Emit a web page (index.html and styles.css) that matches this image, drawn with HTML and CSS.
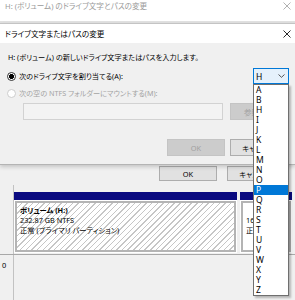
FILE: index.html
```html
<!DOCTYPE html>
<html lang="ja">

<head>
  <meta charset="UTF-8">
  <meta name="viewport" content="width=device-width, initial-scale=1.0">
  <title>ドライブ文字またはパスの変更</title>
  <link rel="stylesheet" href="styles.css">
</head>

<body>
  <div class="outer-title">
    <span>H: (ボリューム) のドライブ文字とパスの変更</span>
    <svg class="close" width="8" height="8" viewBox="0 0 8 8"><path d="M0.5 0.5L7.5 7.5M7.5 0.5L0.5 7.5" stroke="#a8a8a8" stroke-width="0.9"/></svg>
  </div>

  <div class="dialog">
    <div class="dialog-title">
      <span>ドライブ文字またはパスの変更</span>
      <svg class="close" width="8" height="8" viewBox="0 0 8 8"><path d="M0.5 0.5L7.5 7.5M7.5 0.5L0.5 7.5" stroke="#111" stroke-width="0.9"/></svg>
    </div>

    <div class="dialog-body">
      <p class="intro">H: (ボリューム) の新しいドライブ文字またはパスを入力します。</p>

      <div class="option-row">
        <label class="radio"><span class="dot checked"></span>次のドライブ文字を割り当てる(A):</label>
        <div class="combo">
          <div class="combo-box">
            <span>H</span>
            <svg width="7" height="4" viewBox="0 0 7 4"><path d="M0.5 0.5L3.5 3.3L6.5 0.5" fill="none" stroke="#444" stroke-width="0.9"/></svg>
          </div>
          <ul class="combo-list">
            <li>A</li>
            <li>B</li>
            <li>H</li>
            <li>I</li>
            <li>J</li>
            <li>K</li>
            <li>L</li>
            <li>M</li>
            <li>N</li>
            <li>O</li>
            <li class="selected">P</li>
            <li>Q</li>
            <li>R</li>
            <li>S</li>
            <li>T</li>
            <li>U</li>
            <li>V</li>
            <li>W</li>
            <li>X</li>
            <li>Y</li>
            <li>Z</li>
          </ul>
        </div>
      </div>

      <label class="radio disabled"><span class="dot"></span>次の空の NTFS フォルダーにマウントする(M):</label>

      <div class="path-row">
        <div class="textbox"></div>
        <button class="btn" disabled>参照(R)...</button>
      </div>

      <div class="actions">
        <button class="btn" disabled>OK</button>
        <button class="btn">キャンセル</button>
      </div>
    </div>
  </div>

  <div class="outer-actions">
    <button class="btn small">OK</button>
    <button class="btn small">キャンセル</button>
  </div>

  <div class="disk-row">
    <div class="disk-label"></div>
    <div class="partitions">
      <div class="part main">
        <div class="part-head"></div>
        <div class="part-body">
          <div class="part-inner hatched">
            <div class="vol-name">ボリューム (H:)</div>
            <div>232.87 GB NTFS</div>
            <div>正常 (プライマリ パーティション)</div>
          </div>
        </div>
      </div>
      <div class="part side">
        <div class="part-head"></div>
        <div class="part-body">
          <div class="part-inner">
            <div class="vol-name">&nbsp;</div>
            <div>16 MB</div>
            <div>正常 (予約済み)</div>
          </div>
        </div>
      </div>
    </div>
  </div>

  <div class="disk-row next">
    <div class="disk-label">0</div>
    <div class="partitions"></div>
  </div>
</body>

</html>
```

FILE: styles.css
```css
* {
  box-sizing: border-box;
}
body {
  margin: 0;
  width: 295px;
  height: 300px;
  overflow: hidden;
  background-color: #f0f0f0;
  font-family: 'Noto Sans', 'Noto Sans CJK JP', sans-serif;
  font-size: 7.2px;
  font-feature-settings: "palt";
  color: #000;
}
.outer-title {
  height: 23px;
  background-color: #fff;
  display: flex;
  justify-content: space-between;
  padding: 0 4px 0 5px;
  line-height: 12px;
  font-size: 7.6px;
  color: #9a9a9a;
  border-bottom: 2px solid #e2e2e2;
}
.outer-title .close {
  margin-top: 2px;
}
.dialog {
  position: relative;
  z-index: 1;
  border-top: 1px solid #c4c4c4;
  border-bottom: 1px solid #b4b4b4;
  box-shadow: 0 2px 4px rgba(0, 0, 0, 0.18);
  background-color: #f0f0f0;
}
.dialog-title {
  height: 19px;
  background-color: #fff;
  display: flex;
  align-items: center;
  justify-content: space-between;
  padding: 0 4px 0 5px;
  font-size: 7.6px;
}
.dialog-body {
  padding: 8px 0 8px 7px;
}
.intro {
  margin: 0;
  line-height: 12px;
  padding-left: 1px;
}
.option-row {
  margin-top: 5px;
  height: 16px;
  display: flex;
  align-items: center;
  justify-content: space-between;
  padding-right: 6px;
}
.radio {
  display: flex;
  align-items: center;
  height: 12px;
}
.radio.disabled {
  margin-top: 3px;
  color: #a3a3a3;
}
.dot {
  width: 9px;
  height: 9px;
  border: 1px solid #333;
  border-radius: 50%;
  background-color: #fff;
  margin-right: 3px;
}
.dot.checked {
  background: radial-gradient(circle, #000 0 2.2px, #fff 2.8px);
}
.radio.disabled .dot {
  border-color: #cdcdcd;
}
.combo {
  position: relative;
  width: 36px;
  height: 16px;
}
.combo-box {
  height: 16px;
  border: 1px solid #0078d7;
  background-color: #e5f1fb;
  display: flex;
  align-items: center;
  justify-content: space-between;
  padding: 0 3px 0 2px;
  font-size: 8.5px;
}
.combo-list {
  position: absolute;
  top: 100%;
  left: 0;
  width: 36px;
  margin: 0;
  padding: 0;
  list-style: none;
  background-color: #fff;
  border: 1px solid #6f6f6f;
  box-shadow: 2px 2px 2px rgba(0, 0, 0, 0.25);
  z-index: 5;
}
.combo-list li {
  height: 10px;
  line-height: 10px;
  padding-left: 2px;
  font-size: 8.5px;
}
.combo-list li.selected {
  background-color: #0078d7;
  color: #fff;
}
.path-row {
  margin-top: 4px;
  display: flex;
  height: 17px;
}
.textbox {
  margin-left: 16px;
  width: 200px;
  border: 1px solid #d2d2d2;
  background-color: #f3f3f3;
}
.btn {
  width: 58px;
  height: 17px;
  padding: 0;
  border: 1px solid #adadad;
  background-color: #e1e1e1;
  font-family: inherit;
  font-size: 7.4px;
  font-feature-settings: "palt";
  color: #000;
  white-space: nowrap;
  overflow: hidden;
}
.btn:disabled {
  background-color: #cccccc;
  border-color: #c4c4c4;
  color: #a0a0a0;
}
.path-row .btn {
  margin-left: 7px;
}
.actions {
  margin-top: 19px;
  display: flex;
  justify-content: flex-end;
  gap: 5px;
  padding-right: 7px;
}
.outer-actions {
  display: flex;
  justify-content: flex-end;
  gap: 10px;
  padding: 1px 10px 4px 0;
}
.btn.small {
  height: 15px;
}
.disk-row {
  display: flex;
  height: 70px;
  border-bottom: 1px solid #a8a8a8;
}
.disk-row.next {
  height: 60px;
  border-bottom: none;
}
.disk-label {
  width: 14px;
  border-right: 1px solid #c2c2c2;
  padding: 5px 0 0 2px;
  line-height: 10px;
  font-size: 7.4px;
}
.partitions {
  flex: 1;
  display: flex;
  gap: 3px;
  padding-top: 7px;
}
.part.main {
  width: 223px;
}
.part.side {
  width: 52px;
}
.part-head {
  height: 8px;
  background-color: #0a0a80;
}
.part-body {
  height: 53px;
  padding: 1px;
  background-color: #fff;
}
.part-inner {
  height: 100%;
  border: 2px solid #b4b4b4;
  padding: 2px 3px;
  line-height: 10px;
  font-size: 7.3px;
  white-space: nowrap;
  overflow: hidden;
  background-color: #fff;
}
.part-inner.hatched {
  background: repeating-linear-gradient(135deg, #fff 0 3px, #c6c6c6 3px 4px);
}
.vol-name {
  font-weight: bold;
}
```
